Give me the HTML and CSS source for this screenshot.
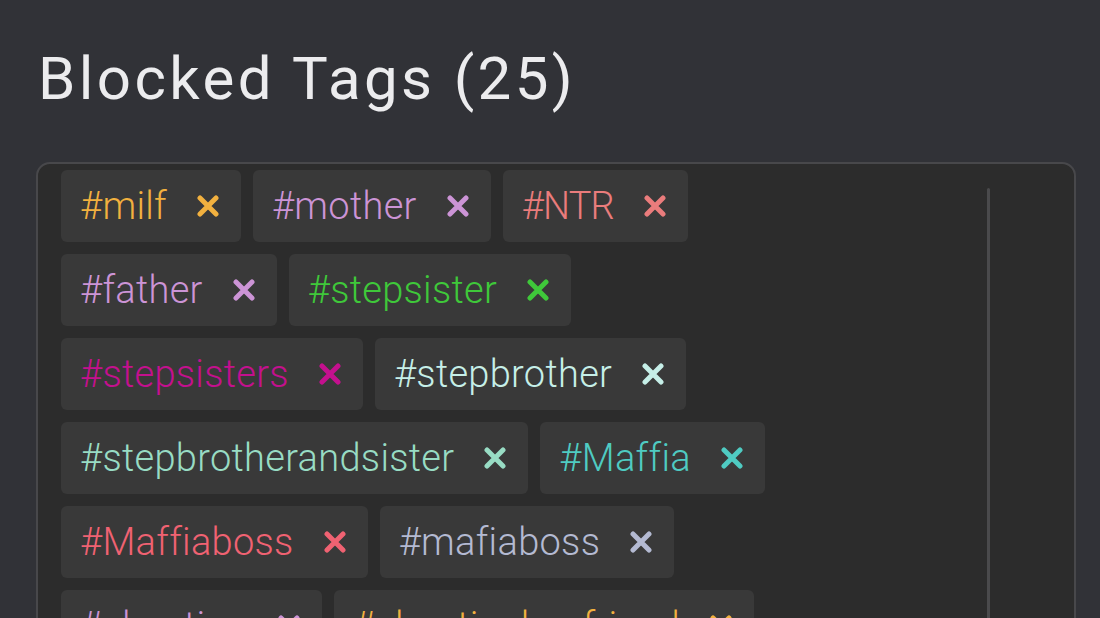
FILE: index.html
```html
<!DOCTYPE html>
<html lang="en">
<head>
<meta charset="utf-8">
<title>Blocked Tags</title>
<link rel="stylesheet" href="styles.css">
</head>
<body>
<main class="page">
  <h1 class="title">Blocked Tags (25)</h1>
  <section class="panel">
    <ul class="tags">
      <li class="tag c-milf"><span class="tag-text">#milf</span><svg class="x" viewBox="0 0 22 22"><path d="M3 3 L19 19 M19 3 L3 19"/></svg></li>
      <li class="tag c-mother"><span class="tag-text">#mother</span><svg class="x" viewBox="0 0 22 22"><path d="M3 3 L19 19 M19 3 L3 19"/></svg></li>
      <li class="tag c-ntr"><span class="tag-text caps">#NTR</span><svg class="x" viewBox="0 0 22 22"><path d="M3 3 L19 19 M19 3 L3 19"/></svg></li>
      <li class="tag c-father"><span class="tag-text">#father</span><svg class="x" viewBox="0 0 22 22"><path d="M3 3 L19 19 M19 3 L3 19"/></svg></li>
      <li class="tag c-stepsister"><span class="tag-text">#stepsister</span><svg class="x" viewBox="0 0 22 22"><path d="M3 3 L19 19 M19 3 L3 19"/></svg></li>
      <li class="tag c-stepsisters"><span class="tag-text">#stepsisters</span><svg class="x" viewBox="0 0 22 22"><path d="M3 3 L19 19 M19 3 L3 19"/></svg></li>
      <li class="tag c-stepbrother"><span class="tag-text">#stepbrother</span><svg class="x" viewBox="0 0 22 22"><path d="M3 3 L19 19 M19 3 L3 19"/></svg></li>
      <li class="tag c-sbas"><span class="tag-text">#stepbrotherandsister</span><svg class="x" viewBox="0 0 22 22"><path d="M3 3 L19 19 M19 3 L3 19"/></svg></li>
      <li class="tag c-maffia"><span class="tag-text">#Maffia</span><svg class="x" viewBox="0 0 22 22"><path d="M3 3 L19 19 M19 3 L3 19"/></svg></li>
      <li class="tag c-maffiaboss"><span class="tag-text">#Maffiaboss</span><svg class="x" viewBox="0 0 22 22"><path d="M3 3 L19 19 M19 3 L3 19"/></svg></li>
      <li class="tag c-mafiaboss"><span class="tag-text">#mafiaboss</span><svg class="x" viewBox="0 0 22 22"><path d="M3 3 L19 19 M19 3 L3 19"/></svg></li>
      <li class="tag c-cheating"><span class="tag-text">#cheating</span><svg class="x" viewBox="0 0 22 22"><path d="M3 3 L19 19 M19 3 L3 19"/></svg></li>
      <li class="tag c-bestfriends"><span class="tag-text">#cheatingboyfriend</span><svg class="x" viewBox="0 0 22 22"><path d="M3 3 L19 19 M19 3 L3 19"/></svg></li>
    </ul>
    <div class="track"></div>
  </section>
</main>
</body>
</html>
```

FILE: styles.css
```css
html, body {
  margin: 0;
  padding: 0;
  background: #313237;
  overflow: hidden;
  height: 618px;
}

.page {
  padding: 0 24px 0 36px;
}

.title {
  margin: 49px 0 53px 2px;
  font-family: Roboto, "Liberation Sans", sans-serif;
  font-weight: 400;
  font-size: 60px;
  line-height: 60px;
  letter-spacing: 3.4px;
  color: #ececee;
}

.panel {
  display: flex;
  align-items: flex-start;
  height: 520px;
  background: #2c2c2c;
  border: 2px solid #48484b;
  border-radius: 14px;
  overflow: hidden;
}

.tags {
  list-style: none;
  margin: 0;
  padding: 6px 0 0 23px;
  width: 820px;
  display: flex;
  flex-wrap: wrap;
  gap: 12px;
  align-content: flex-start;
}

.tag {
  display: flex;
  align-items: center;
  gap: 30px;
  height: 72px;
  padding: 0 22px 0 19px;
  background: #393939;
  border-radius: 6px;
  box-sizing: border-box;
}

.tag-text {
  font-family: Roboto, "Liberation Sans", sans-serif;
  font-weight: 300;
  font-size: 38px;
  line-height: 1;
  letter-spacing: 0.3px;
}

.caps {
  letter-spacing: -0.8px;
}

.x {
  width: 22px;
  height: 22px;
  fill: none;
  stroke: currentColor;
  stroke-width: 5;
  stroke-linecap: round;
  flex: none;
}

.track {
  flex: none;
  width: 3px;
  height: 480px;
  margin: 24px 84px 0 auto;
  background: #4a4a4c;
  border-radius: 2px;
}

.c-milf { color: #f2b13f; }
.c-mother { color: #cc94d6; }
.c-ntr { color: #ea7c7c; }
.c-father { color: #cc94d6; }
.c-stepsister { color: #3fc83a; }
.c-stepsisters { color: #c4108e; }
.c-stepbrother { color: #c6efe8; }
.c-sbas { color: #98dcc4; }
.c-maffia { color: #4fcbc2; }
.c-maffiaboss { color: #f06272; }
.c-mafiaboss { color: #b4bad2; }
.c-cheating { color: #cc94d6; }
.c-bestfriends { color: #f2b13f; }
```
